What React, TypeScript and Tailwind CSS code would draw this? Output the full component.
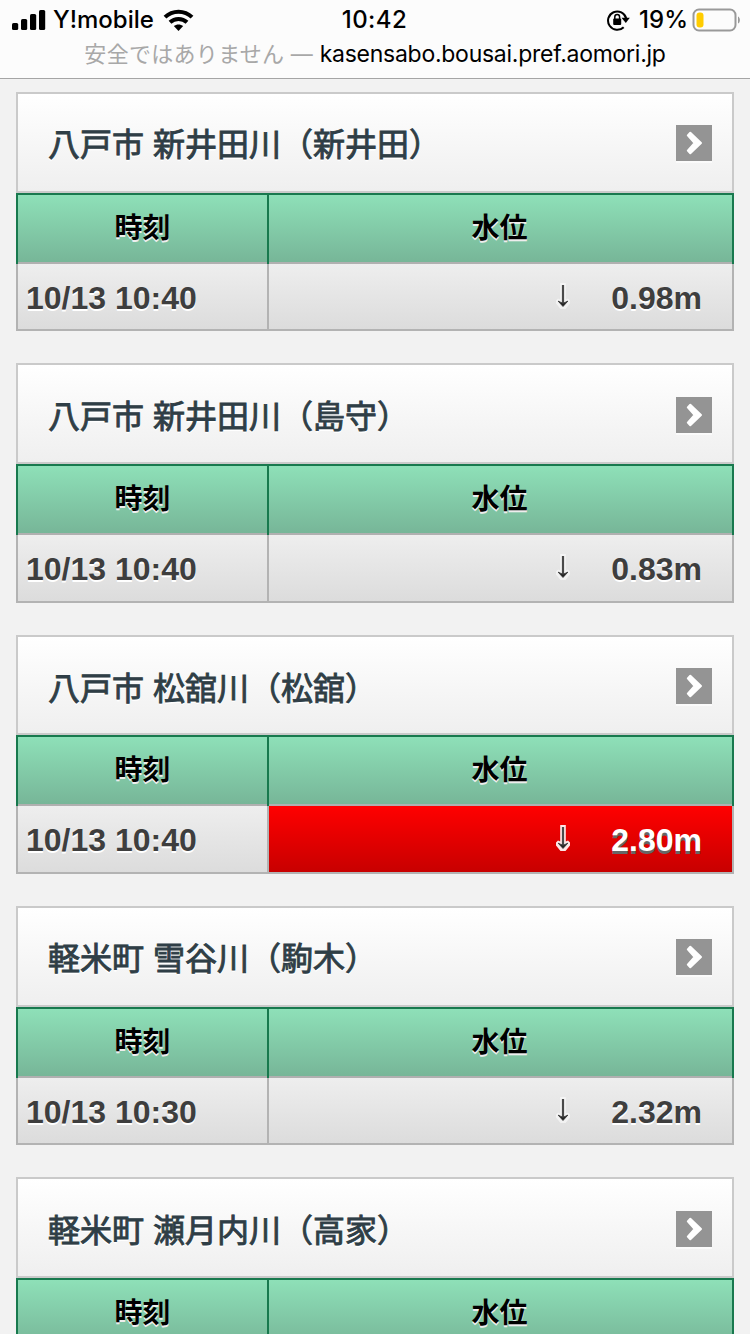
type Station = {
  name: string;
  time: string;
  level: string;
  alert?: boolean;
  titleH: string;
  bodyH: string;
  cellPad: string;
};

const stations: Station[] = [
  { name: "八戸市 新井田川（新井田）", time: "10/13 10:40", level: "0.98m", titleH: "h-[101px] pt-0", bodyH: "h-[67px]", cellPad: "pt-[3px]" },
  { name: "八戸市 新井田川（島守）", time: "10/13 10:40", level: "0.83m", titleH: "h-[101px] pt-[2px]", bodyH: "h-[68px]", cellPad: "pt-px" },
  { name: "八戸市 松舘川（松舘）", time: "10/13 10:40", level: "2.80m", alert: true, titleH: "h-[100px] pt-[2px]", bodyH: "h-[68px]", cellPad: "pt-px" },
  { name: "軽米町 雪谷川（駒木）", time: "10/13 10:30", level: "2.32m", titleH: "h-[101px] pt-0", bodyH: "h-[67px]", cellPad: "pt-[3px]" },
  { name: "軽米町 瀬月内川（高家）", time: "10/13 10:30", level: "1.20m", titleH: "h-[101px] pt-[2px]", bodyH: "h-[67px]", cellPad: "pt-[3px]" },
];

function DownArrow({ alert }: { alert?: boolean }) {
  return (
    <svg className="h-[28px] w-[18px]" viewBox="0 0 18 28" fill="none">
      <path
        d="M6.2 0H11.8V16.5L14 15.5L16 17.5V20.5L11.5 26H6.5L2 20.5V17.5L4 15.5L6.2 16.5Z"
        fill="#fff"
        fillOpacity={alert ? 0.9 : 0.55}
      />
      <path d="M9 2V22" stroke="#4a4a4a" strokeWidth="2.2" />
      <path d="M4.2 18.2L9 23.4L13.8 18.2L9 20.4Z" fill="#222" stroke="#3a3a3a" strokeWidth="1" />
    </svg>
  );
}

function Card({ s }: { s: Station }) {
  return (
    <section className="w-[718px] shrink-0">
      <div className={`${s.titleH} flex items-center justify-between border-2 border-[#cacaca] bg-linear-to-b from-white to-[#efefef] pr-5 pl-[30px]`}>
        <h2 className="pt-[5px] text-[32px] leading-[48px] font-normal whitespace-pre text-[#2f3e46] [-webkit-text-stroke:0.9px_#2f3e46] [text-shadow:0_2px_0_#fff]">
          {s.name}
        </h2>
        <span className="flex size-9 items-center justify-center bg-[#949494] shadow-[0_2px_0_rgba(255,255,255,0.6)]">
          <svg className="size-9" viewBox="0 0 36 36">
            <path
              d="M14.3 7.7L25 18L14.3 28.3L11.8 25.6L18.6 18L11.8 10.4Z"
              fill="#fff"
              stroke="#fff"
              strokeWidth="2"
              strokeLinejoin="round"
            />
          </svg>
        </span>
      </div>
      <div className="flex h-[71px]">
        {["時刻", "水位"].map((t, i) => (
          <div
            key={t}
            className={`${i === 0 ? "w-[251px]" : "w-[467px] border-r-2"} flex flex-col border-t-2 border-l-2 border-[#18794e]`}
          >
            <div
              className={`${i === 0 ? "" : "pr-[2px]"} flex h-[67px] items-center justify-center bg-linear-to-b from-[#8ee0b8] to-[#77b698] pt-px text-[28px] leading-none font-bold text-black [text-shadow:0_2px_0_#eee]`}
            >
              {t}
            </div>
            <div className="h-[2px] bg-[#b0b0b0]" />
          </div>
        ))}
      </div>
      <div className={`${s.bodyH} flex border-x-2 border-b-2 border-[#b3b3b3] text-[32px] leading-none font-bold text-[#3e3e3e]`}>
        <div className={`${s.cellPad} flex w-[251px] items-center border-r-2 border-[#b3b3b3] bg-linear-to-b from-[#eee] to-[#dcdcdc] pl-[8px] [text-shadow:0_2px_0_#fff]`}>
          {s.time}
        </div>
        <div
          className={`${s.cellPad} flex grow items-center justify-end bg-linear-to-b pr-[30px] ${
            s.alert ? "from-[#ff0000] to-[#c80000] text-white [text-shadow:0_3px_0_#666]" : "from-[#eee] to-[#dcdcdc] [text-shadow:0_2px_0_#fff]"
          }`}
        >
          <span className="mr-[39px] -mt-[2px]">
            <DownArrow alert={s.alert} />
          </span>
          {s.level}
        </div>
      </div>
    </section>
  );
}

function StatusBar() {
  return (
    <header className="h-[79px] shrink-0 border-b border-[#a5a5a5] bg-[#fcfcfc] font-[Inter,'Noto_Sans_CJK_JP',sans-serif] text-black">
      <div className="grid h-[39px] grid-cols-[1fr_auto_1fr] items-center pr-[10px] pl-3 text-[24px] leading-none font-medium">
        <div className="flex items-center">
          <svg className="h-[22px] w-[34px]" viewBox="0 0 34 22">
            <rect x="0" y="14" width="6.2" height="7" rx="1.6" />
            <rect x="9" y="10" width="6.2" height="11" rx="1.6" />
            <rect x="18" y="5" width="6.2" height="16" rx="1.6" />
            <rect x="27" y="1" width="6.2" height="20" rx="1.6" />
          </svg>
          <span className="ml-[7px] w-[101px] whitespace-nowrap">Y!mobile</span>
          <svg className="ml-[9px] h-[22px] w-[31px]" viewBox="0 0 31 22" fill="none" stroke="#000" strokeWidth="4">
            <path d="M2 8.2C9.5 0.8 21.5 0.8 29 8.2" />
            <path d="M7 13.3C11.8 8.8 19.2 8.8 24 13.3" />
            <path d="M15.5 22L10.8 17.1C13.5 14.9 17.5 14.9 20.2 17.1Z" fill="#000" stroke="none" />
          </svg>
        </div>
        <div className="-ml-[3px] tracking-[0.4px]">10:42</div>
        <div className="flex items-center justify-end">
          <svg className="mr-[9px] h-[22px] w-[23px]" viewBox="0 0 23 22" fill="none">
            <path d="M16.7 18.2A9.2 9.2 0 1 1 19.2 9.5" stroke="#000" strokeWidth="2" />
            <path d="M14.5 8.8H22.8L18.8 14Z" fill="#000" />
            <rect x="6.2" y="9.5" width="8" height="6.5" rx="1" fill="#000" />
            <path d="M7.8 10V8a2.4 2.4 0 0 1 4.8 0V10" stroke="#000" strokeWidth="1.5" />
          </svg>
          <span className="whitespace-nowrap">19%</span>
          <svg className="ml-[4px] h-[24px] w-[48px] shrink-0" viewBox="0 0 48 24">
            <rect x="1.5" y="1.5" width="42" height="21" rx="5.5" fill="none" stroke="#999" strokeWidth="2" />
            <rect x="4.5" y="4.5" width="7" height="15" rx="3" fill="#ffcc00" />
            <path d="M46 8.5C48.5 9.5 48.5 14.5 46 15.5Z" fill="#999" />
          </svg>
        </div>
      </div>
      <div className="flex h-[30px] items-center justify-center text-[23px] leading-none whitespace-pre">
        <span className="text-[22px] tracking-[0.3px] text-[#a8a8a8]">安全ではありません — </span>
        <span className="tracking-[-0.26px]">kasensabo.bousai.pref.aomori.jp</span>
      </div>
    </header>
  );
}

export default function App() {
  return (
    <div className="flex h-[1334px] w-[750px] flex-col overflow-hidden bg-[#f2f2f2] font-['Liberation_Sans','Noto_Sans_CJK_JP',sans-serif]">
      <StatusBar />
      <main className="flex flex-col items-center gap-8 pt-[13px]">
        {stations.map((s) => (
          <Card key={s.name} s={s} />
        ))}
      </main>
    </div>
  );
}
